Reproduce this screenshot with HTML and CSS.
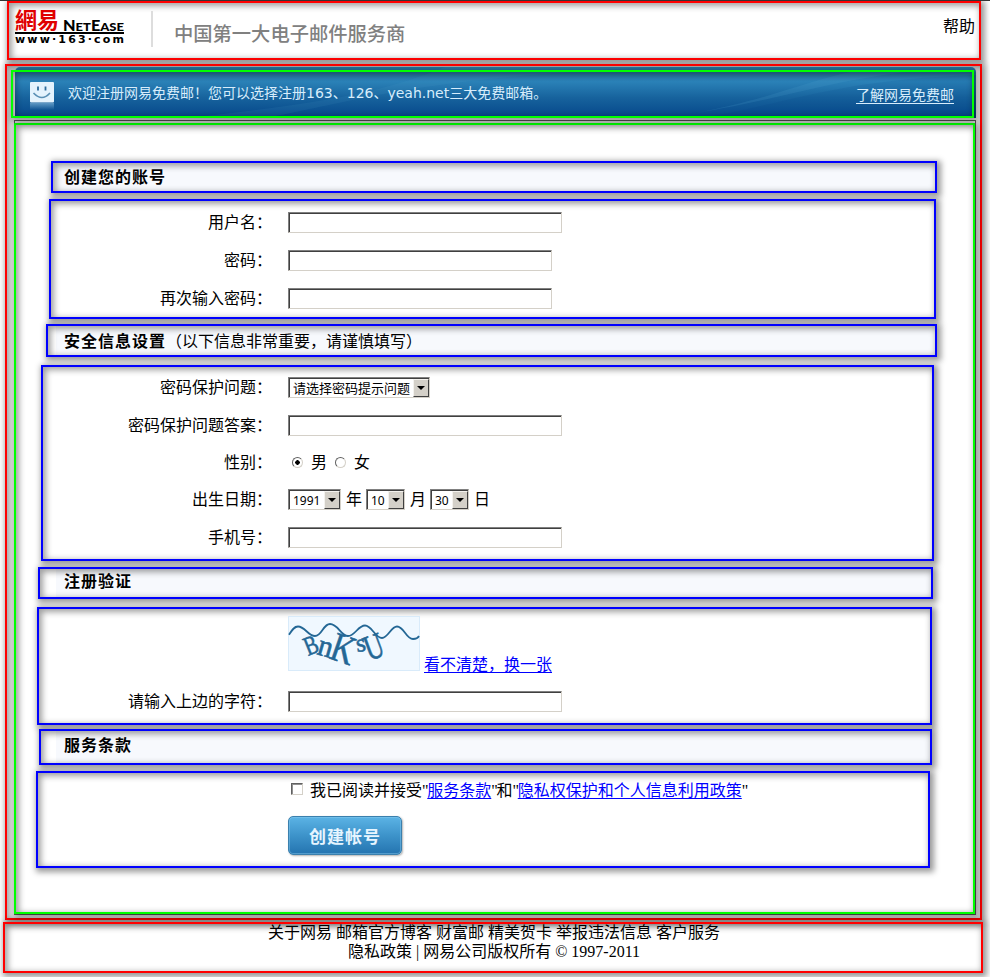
FILE: index.html
```html
<!DOCTYPE html>
<html lang="zh-CN">
<head>
<meta charset="utf-8">
<title>注册网易免费邮</title>
<link rel="stylesheet" href="styles.css">
</head>
<body>
<header class="frame red header">
  <svg class="logo" width="112" height="40" viewBox="0 0 112 40">
    <text class="logo-cn" x="0" y="19" textLength="44">網易</text>
    <text class="logo-en" x="48" y="21.500" textLength="61" lengthAdjust="spacingAndGlyphs">N<tspan class="sc">ET</tspan>E<tspan class="sc">ASE</tspan></text>
    <rect x="0" y="23" width="109" height="2"/>
    <text class="logo-url" x="0" y="34" textLength="109">www·163·com</text>
  </svg>
  <span class="divider"></span>
  <h1 class="slogan">中国第一大电子邮件服务商</h1>
  <a class="help">帮助</a>
</header>

<main class="frame red main">
  <div class="banner">
    <svg class="rays" width="961" height="51" viewBox="0 0 961 51">
      <path d="M250 51C360 30 400 12 640 0H430C380 20 330 35 170 51Z" fill="#5aa5d2" opacity=".1"/>
      <path d="M680 46C760 34 810 14 900 4H840C790 14 750 34 680 46Z" fill="#5aa5d2" opacity=".16"/>
      <path d="M690 51C780 34 830 12 961 8V51Z" fill="#003c82" opacity=".1"/>
    </svg>
    <div class="frame green banner-box">
      <svg class="smile" width="24" height="29" viewBox="0 0 24 29">
        <defs><linearGradient id="fade" x2="0" y2="1"><stop stop-color="#a8d4f0" stop-opacity=".5"/><stop offset="1" stop-color="#a8d4f0" stop-opacity="0"/></linearGradient></defs>
        <rect width="24" height="20.500" rx="1" fill="#e4f3fd"/>
        <path d="M8 4.500V8.500M15.500 4.500V8.500" stroke="#2d6c9c" stroke-width="1.800"/>
        <path d="M3.500 11Q12 20 20 11" fill="none" stroke="#5a90b5" stroke-width="1.600"/>
        <rect y="21" width="24" height="7" fill="url(#fade)"/>
      </svg>
      <p class="welcome">欢迎注册网易免费邮！您可以选择注册163、126、yeah.net三大免费邮箱。</p>
      <a class="about">了解网易免费邮</a>
    </div>
  </div>

  <div class="panel">
    <form class="frame green form">
      <h2 class="frame blue title t1"><b>创建您的账号</b></h2>
      <section class="frame blue group g1">
        <div class="row"><label>用户名：</label><span class="input"></span></div>
        <div class="row"><label>密码：</label><span class="input short"></span></div>
        <div class="row"><label>再次输入密码：</label><span class="input short"></span></div>
      </section>
      <h2 class="frame blue title t2"><b>安全信息设置</b>（以下信息非常重要，请谨慎填写）</h2>
      <section class="frame blue group g2">
        <div class="row"><label>密码保护问题：</label><span class="select wide">请选择密码提示问题<i></i></span></div>
        <div class="row"><label>密码保护问题答案：</label><span class="input"></span></div>
        <div class="row gender"><label>性别：</label><span class="radio on"></span><span class="option">男</span><span class="radio"></span><span class="option">女</span></div>
        <div class="row"><label>出生日期：</label><span class="select year">1991<i></i></span><span class="unit">年</span><span class="select num">10<i></i></span><span class="unit">月</span><span class="select num">30<i></i></span><span class="unit">日</span></div>
        <div class="row"><label>手机号：</label><span class="input"></span></div>
      </section>
      <h2 class="frame blue title t3"><b>注册验证</b></h2>
      <section class="frame blue group g3">
        <div class="row captcha-row">
          <label></label>
          <svg class="captcha" width="132" height="55" viewBox="0 0 132 55">
            <rect x=".5" y=".5" width="131" height="54" fill="#f0f8ff" stroke="#d9ebfa"/>
            <path d="M1 18.700C4 14 6 10.500 10 10.500C17 10.500 20 20 27 20C34 20 35 8 42 8C50 8 53 20 60 20C67 20 70 9.500 77 9.500C84 9.500 87 22 94 22C100 22 103 10.500 109 10.500C116 10.500 118 23 125 23C128 23 130 22 131 20" fill="none" stroke="#246795" stroke-width="1.800"/>
            <g class="captcha-text">
              <text font-size="27" transform="translate(20 40) rotate(-22) scale(.75 1)">B</text>
              <text font-size="31" transform="translate(28 38) rotate(16) scale(.95 1)">n</text>
              <text font-size="41" transform="translate(40 42) rotate(19) scale(.78 1)">K</text>
              <text font-size="25" transform="translate(69 36) rotate(-8)">s</text>
              <text font-size="36" transform="translate(81 45) rotate(-20) scale(.72 1)">U</text>
            </g>
          </svg>
          <a class="link refresh">看不清楚，换一张</a>
        </div>
        <div class="row"><label>请输入上边的字符：</label><span class="input"></span></div>
      </section>
      <h2 class="frame blue title t4"><b>服务条款</b></h2>
      <section class="frame blue group g4">
        <div class="agree"><span class="checkbox"></span><span>我已阅读并接受<q>"</q><a class="link">服务条款</a><q>"</q>和<q>"</q><a class="link">隐私权保护和个人信息利用政策</a><q>"</q></span></div>
        <button class="submit" type="button">创建帐号</button>
      </section>
    </form>
  </div>
</main>

<footer class="frame red footer">
  <p>关于网易 邮箱官方博客 财富邮 精美贺卡 举报违法信息 客户服务</p>
  <p>隐私政策 | 网易公司版权所有 © 1997-2011</p>
</footer>
</body>
</html>
```
FILE: styles.css
```css
* { box-sizing: border-box; }
html { overflow: hidden; background: #fff; }
body {
  margin: 0;
  height: 977px;
  overflow: hidden;
  border-top: 1px solid #333;
  font: 16px/21px "Liberation Serif", "Noto Sans CJK SC", serif;
  color: #000;
}
h1, h2, p { margin: 0; font-size: inherit; font-weight: normal; white-space: nowrap; }
svg { display: block; flex: none; overflow: visible; }

/* Outlined frames: the stroke casts a shadow to both sides */
.frame {
  border: 2px solid;
  box-shadow: 2px 2px 6px 2px rgba(0, 0, 0, .4), inset 2px 2px 6px 1px rgba(0, 0, 0, .38);
}
.red { border-color: #f00; }
.green { border-color: #0f0; }
.blue { border-color: #00f; }

/* Header */
.header { display: flex; margin-left: 7px; width: 974px; height: 59px; padding: 6px 4px 0 6px; }
.logo-cn { font: 700 22px "Noto Sans CJK TC", sans-serif; fill: #e00000; }
.logo-en { font: 900 15px Lato, sans-serif; }
.logo-en .sc { font-size: 12px; }
.logo-url { font: 700 11px "DejaVu Sans", sans-serif; }
.divider { width: 2px; height: 36px; margin: 2px 0 0 24px; background: #ddd; }
.slogan { margin: 13px 0 0 21px; font: 500 19.300px/22px "Noto Sans CJK SC", sans-serif; color: #808080; }
.help { margin: 7px 0 0 auto; }

/* Banner */
.main { margin: 4px 0 0 5px; width: 977px; height: 856px; padding: 1px 0 0 7px; }
.banner {
  position: relative;
  margin-left: 1px;
  width: 961px;
  height: 51px;
  border-radius: 5px 5px 0 0;
  background: linear-gradient(#26749f, #2b82b8 28%, #17639d 60%, #05468a);
}
.rays { position: absolute; left: 0; top: 0; }
.banner-box {
  position: relative;
  top: 3px;
  left: -4px;
  display: flex;
  width: 963px;
  height: 48px;
  padding: 10px 18px 0 17px;
  color: #d7edfc;
  font: 14px/22px "DejaVu Sans", "Noto Sans CJK SC", sans-serif;
}
.welcome { margin-left: 14px; }
.about { margin: 2px 0 0 auto; text-decoration: underline; text-underline-offset: 3px; }

/* Panel */
.panel { margin: 2px 0 0; width: 962px; height: 795px; border: 1px solid #606060; }
.form { margin: 2px 0 0 -1px; width: 961px; height: 791px; padding-top: 36px; }

.title { line-height: 29px; background: linear-gradient(90deg, #fff var(--lead), #f7f9fd var(--lead)); }
.title b { letter-spacing: 1px; font-family: "Noto Sans CJK SC", sans-serif; line-height: 20px; }
.t1 { --lead: 3px; margin-left: 35px; width: 886px; height: 32px; padding-left: 11px; }
.t2 { --lead: 8px; margin: 5px 0 0 30px; width: 891px; height: 33px; padding: 1px 0 0 16px; line-height: 30px; }
.t3 { --lead: 16px; margin: 6px 0 0 22px; width: 895px; height: 32px; padding-left: 24px; line-height: 25px; }
.t4 { --lead: 15px; margin: 4px 0 0 23px; width: 893px; height: 36px; padding-left: 23px; line-height: 29px; }

.g1 { margin: 6px 0 0 33px; width: 887px; height: 120px; padding: 11px 0 0 13px; }
.g2 { margin: 8px 0 0 25px; width: 893px; height: 196px; padding: 10px 0 0 21px; }
.g3 { margin: 8px 0 0 21px; width: 895px; height: 118px; padding: 7px 0 0 25px; }
.g4 { margin: 6px 0 0 20px; width: 894px; height: 97px; padding: 7px 0 0 250px; }

.row { display: flex; height: 38px; line-height: 21px; }
.row label { width: 208px; margin-right: 16px; text-align: right; flex: none; }
.gender { height: 36px; line-height: 19px; }
.captcha-row { height: 75px; }

/* Controls */
.input, .select {
  flex: none;
  height: 21px;
  border: 1px solid;
  border-color: #808080 #d4d0c8 #d4d0c8 #808080;
  box-shadow: inset 1px 1px #404040;
  background: #fff;
}
.input { width: 274px; }
.short { width: 264px; }
.select {
  display: flex;
  justify-content: space-between;
  padding: 1px 0 0 4px;
  font: 12px/19px "Noto Sans", "Noto Sans CJK SC", sans-serif;
}
.wide { width: 142px; font-size: 13px; }
.year { width: 53px; }
.num { width: 39px; }
.select i {
  display: flex;
  align-items: center;
  justify-content: center;
  width: 16px;
  height: 18px;
  border: 1px solid;
  border-color: #f4f2ee #404040 #404040 #f4f2ee;
  background: #d4d0c8;
}
.select i::before { content: ""; border: 4px solid transparent; border-top-color: #000; border-bottom: 0; }
.unit { width: 25px; padding-left: 5px; }
.radio {
  width: 11px;
  height: 11px;
  margin: 4px 0 0 4px;
  border: 1px solid;
  border-color: #606060 #d4d0c8 #d4d0c8 #606060;
  border-radius: 50%;
}
.on { background: radial-gradient(circle, #000 2px, #fff 2.500px); }
.option { margin-left: 8px; margin-right: 4px; }
.checkbox {
  width: 12px;
  height: 12px;
  margin: 3px 7px 0 0;
  border: 1px solid;
  border-color: #606060 #d4d0c8 #d4d0c8 #606060;
  box-shadow: inset 1px 1px #909090;
}
.agree { display: flex; height: 36px; padding-left: 3px; white-space: nowrap; }
q { quotes: none; letter-spacing: -1.300px; }
q::before, q::after { content: none; }
.link { color: #00f; text-decoration: underline; text-underline-offset: 2px; text-decoration-thickness: 1px; }
.refresh { margin: 38px 0 0 4px; }
.captcha-text { font-family: "Liberation Serif", serif; font-weight: 400; fill: #246795; stroke: #246795; stroke-width: .6; }
.submit {
  display: block;
  width: 114px;
  height: 39px;
  padding: 0;
  border: 1px solid #3b80ad;
  border-radius: 5px;
  background: linear-gradient(#5bb3e5, #3d93ca 50%, #2474b0);
  box-shadow: inset 0 0 0 1px rgba(140, 205, 240, .45), 1px 1px 2px rgba(0, 0, 0, .3);
  color: #e6f5ff;
  font: 700 17px/37px "Noto Sans CJK SC", sans-serif;
  letter-spacing: 1px;
}

/* Footer */
.footer { margin: 2px 0 0 3px; width: 980px; height: 51px; padding-left: 2px; text-align: center; line-height: 19px; }
.footer p:first-child { margin-top: -1px; }
```
